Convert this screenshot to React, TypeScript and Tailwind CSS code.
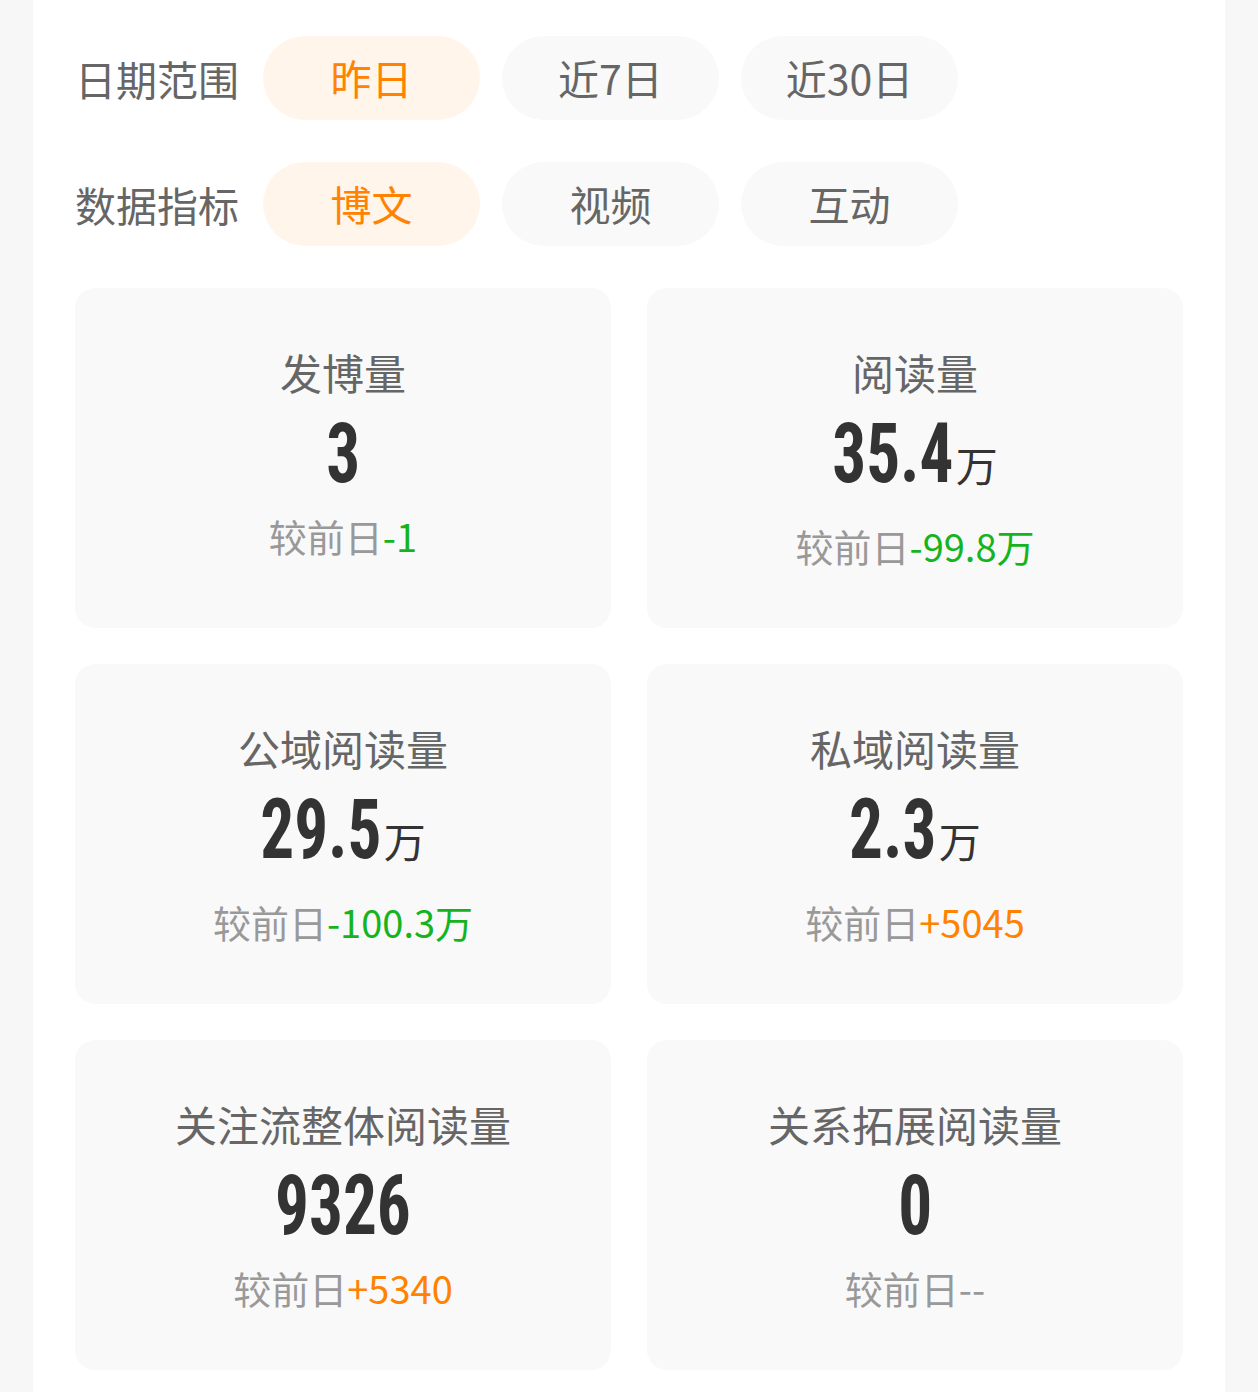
import React from "react";

const cjk = '"Noto Sans CJK SC", "Noto Sans", sans-serif';
const num = '"Roboto Condensed", "Liberation Sans Narrow", "DejaVu Sans Condensed", sans-serif';

interface Stat {
  title: string;
  value: string;
  unit?: string;
  delta: string;
  trend: "down" | "up" | "none";
}

const stats: Stat[] = [
  { title: "发博量", value: "3", delta: "-1", trend: "down" },
  { title: "阅读量", value: "35.4", unit: "万", delta: "-99.8万", trend: "down" },
  { title: "公域阅读量", value: "29.5", unit: "万", delta: "-100.3万", trend: "down" },
  { title: "私域阅读量", value: "2.3", unit: "万", delta: "+5045", trend: "up" },
  { title: "关注流整体阅读量", value: "9326", delta: "+5340", trend: "up" },
  { title: "关系拓展阅读量", value: "0", delta: "--", trend: "none" },
];

// the number face is squeezed horizontally; pull the margins in by the amount lost
const SQUEEZE = 0.8;
function squeezeMargin(value: string) {
  const width = value.split("").reduce((w, ch) => w + (ch === "." ? 25 : 42), 0);
  return -((1 - SQUEEZE) / 2) * width;
}

function FilterRow({ label, options, active }: { label: string; options: string[]; active: number }) {
  return (
    <div className="flex items-center gap-[22px]">
      <div className="w-[166px] text-[41px] leading-[56px] text-[#666]">{label}</div>
      {options.map((opt, i) => (
        <button
          key={opt}
          className={`flex h-[84px] w-[217px] items-center justify-center rounded-full text-[41px] ${
            i === active ? "bg-[#fff5ea] text-[#ff8200]" : "bg-[#f9f9f9] text-[#666]"
          }`}
        >
          {opt}
        </button>
      ))}
    </div>
  );
}

function StatCard({ stat }: { stat: Stat }) {
  const deltaColor =
    stat.trend === "down" ? "text-[#15b41f]" : stat.trend === "up" ? "text-[#ff8200]" : "text-[#999]";
  const m = squeezeMargin(stat.value);
  return (
    <div className="flex flex-col items-center rounded-[20px] bg-[#f9f9f9] pt-[56px] pb-[56px]">
      <div className="text-[42px] leading-[56px] text-[#666]">{stat.title}</div>
      <div className={`mt-[12px] flex items-baseline text-[#333] ${stat.unit ? "pb-[10px]" : ""}`}>
        <span
          className="inline-block origin-center scale-x-[0.8] text-[84px] font-bold leading-none"
          style={{ fontFamily: num, marginLeft: m, marginRight: m }}
        >
          {stat.value}
        </span>
        {stat.unit && <span className="ml-[2px] text-[42px] leading-none">{stat.unit}</span>}
      </div>
      <div className="mt-[14px] text-[38px] leading-[52px] text-[#999]">
        较前日<span className={deltaColor}>{stat.delta}</span>
      </div>
    </div>
  );
}

export default function App() {
  return (
    <div className="min-h-screen bg-[#f7f7f7] px-[33px]" style={{ fontFamily: cjk }}>
      <div className="flex min-h-[1392px] flex-col gap-[42px] bg-white px-[42px] pt-[36px] pb-[40px]">
        <FilterRow label="日期范围" options={["昨日", "近7日", "近30日"]} active={0} />
        <FilterRow label="数据指标" options={["博文", "视频", "互动"]} active={0} />
        <div className="grid grid-cols-2 gap-[36px]">
          {stats.map((s) => (
            <StatCard key={s.title} stat={s} />
          ))}
        </div>
      </div>
    </div>
  );
}
